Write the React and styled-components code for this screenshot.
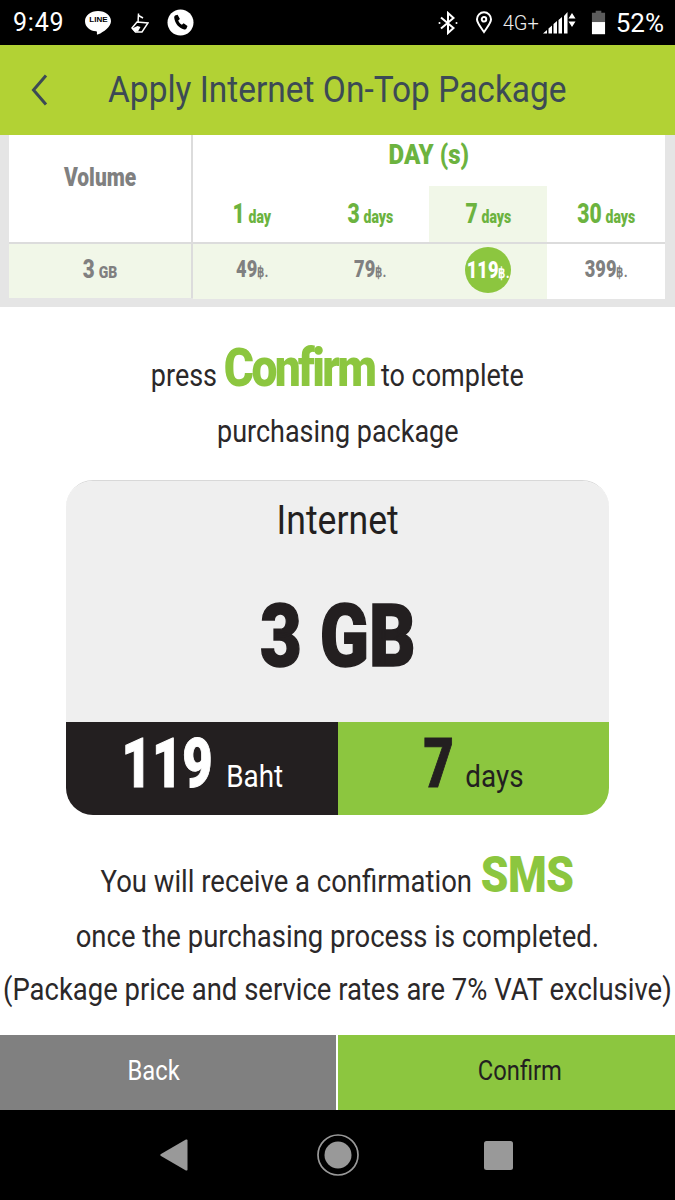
import React from "react";
import styled, { createGlobalStyle } from "styled-components";

const Global = createGlobalStyle`
  html, body { margin: 0; padding: 0; background: #fff; }
  body { font-family: Roboto, "Liberation Sans", sans-serif; }
  * { box-sizing: border-box; }
`;

const Page = styled.div`
  width: 675px; height: 1200px; display: flex; flex-direction: column; overflow: hidden;
`;
const Squeeze = styled.span`
  display: inline-flex; align-items: baseline; white-space: nowrap; transform: scaleX(${p => p.$k});
`;
const StatusBar = styled.div`
  height: 45px; background: #000; color: #fff; display: flex; align-items: center; flex: none;
  justify-content: space-between; padding: 0 11px 0 13px;
`;
const StatusGroup = styled.div`display: flex; align-items: center;`;
const Clock = styled.span`font-size: 25px; margin-right: 21px; letter-spacing: .8px;`;
const Net = styled.span`font-size: 20px; font-weight: 300; color: #eee;`;
const Percent = styled.span`font-size: 26px; margin-left: 10px;`;
const Header = styled.div`
  height: 90px; background: #b2d234; display: flex; align-items: center; padding-left: 31px; flex: none;
`;
const Title = styled.h1`
  margin: 0 0 0 60px; font-size: 36px; font-weight: 400; color: #3c4a55; white-space: nowrap;
  transform: scaleX(.93); transform-origin: left center;
`;
const TableWrap = styled.div`
  height: 172px; flex: none; background: #e5e5e5; padding: 0 10px 9px 9px;
`;
const Table = styled.div`
  background: #fff; height: 163px; display: grid;
  grid-template-columns: 182px 2px repeat(4, 118px); grid-template-rows: 107px 2px 54px;
`;
const VolumeHead = styled.div`
  grid-column: 1; grid-row: 1; display: flex; justify-content: center; padding-top: 28px;
  font-weight: 900; font-size: 25px; color: #808080;
`;
const VLine = styled.div`grid-column: 2; grid-row: 1 / 4; background: #dcdcdc;`;
const HLine = styled.div`grid-column: 1 / 7; grid-row: 2; background: #dcdcdc;`;
const DayHead = styled.div`
  grid-column: 3 / 7; grid-row: 1; display: grid; grid-template-columns: repeat(4, 1fr); grid-template-rows: 51px 56px;
`;
const DayTitle = styled.div`
  grid-column: 1 / 5; display: flex; justify-content: center; color: #6cb33f; font-weight: 900; font-size: 28px;
  padding-top: 3px;
`;
const DayCell = styled.div`
  background: ${p => (p.$on ? "#f1f7e8" : "#fff")}; color: #6cb33f; display: flex; align-items: baseline;
  justify-content: center; font-weight: 900; padding-top: 12px;
`;
const DayNum = styled.span`font-size: 27px; margin-right: 5px;`;
const DayUnit = styled.span`font-size: 18px;`;
const VolumeCell = styled.div`
  grid-column: 1; grid-row: 3; background: #f1f7e8; color: #808080; font-weight: 900; display: flex;
  align-items: baseline; justify-content: center; padding-top: 11px;
`;
const VolNum = styled.span`font-size: 25px; margin-right: 5px;`;
const VolUnit = styled.span`font-size: 17px;`;
const PriceRow = styled.div`
  grid-column: 3 / 7; grid-row: 3; display: grid; grid-template-columns: repeat(4, 1fr);
`;
const PriceCell = styled.div`
  background: ${p => (p.$plain ? "#fff" : "#f1f7e8")}; display: flex; align-items: center; justify-content: center;
  font-weight: 900; font-size: 24px; color: ${p => (p.$picked ? "#fff" : "#808080")};
  padding-bottom: 6px;
`;
const PriceBadge = styled.div`
  width: 46px; height: 46px; border-radius: 50%; background: #8cc63f; display: flex; align-items: center;
  justify-content: center; white-space: nowrap; margin-top: 3px; flex: none;
`;
const Baht = styled.span`font-size: 15px;`;
const Main = styled.div`
  flex: 1; display: flex; flex-direction: column; align-items: center; color: #2b2829; background: #fff;
`;
const Line = styled.div`
  font-size: ${p => p.$size || 31}px; line-height: ${p => p.$h || 56}px; white-space: nowrap;
  transform: scaleX(${p => p.$k || 0.87});
`;
const Intro = styled.div`padding-top: 41px; display: flex; flex-direction: column; align-items: center;`;
const Highlight = styled.span`
  color: #8cc63f; font-weight: 900; font-size: ${p => p.$size}px; margin: 0 ${p => p.$m}px; line-height: 0;
  letter-spacing: ${p => p.$ls}px; display: inline-block;
`;
const Card = styled.div`
  width: 543px; height: 335px; margin-top: 20px; border-radius: 27px; overflow: hidden; flex: none;
  display: flex; flex-direction: column; border-top: 1px solid #d8d8d8;
`;
const CardTop = styled.div`
  flex: 1; background: #efefef; display: flex; flex-direction: column; align-items: center;
`;
const CardLabel = styled.div`font-size: 40px; padding-top: 16px; color: #231f20; transform: scaleX(.89);`;
const CardVolume = styled.div`
  font-size: 87px; font-weight: 900; color: #231f20; margin-top: 44px; -webkit-text-stroke: 1.5px #231f20;
  transform: scaleX(.83); line-height: 96px; white-space: nowrap;
`;
const CardBottom = styled.div`height: 93px; display: flex; flex: none;`;
const Half = styled.div`
  flex: 1; background: ${p => p.$bg}; color: ${p => p.$fg}; display: flex; align-items: baseline;
  justify-content: center; padding-top: 4px;
`;
const HalfNum = styled.span`
  font-size: 68px; font-weight: 900; line-height: 76px; display: inline-block; transform: scaleX(.77);
  margin: 0 ${p => p.$m}px; -webkit-text-stroke: 1px ${p => p.$stroke};
`;
const HalfUnit = styled.span`
  font-size: 32px; display: inline-block; transform: scaleX(.87); margin: 0 -4px 0 ${p => p.$gap}px;
`;
const Note = styled.div`padding-top: 39px; display: flex; flex-direction: column; align-items: center;`;
const Actions = styled.div`display: flex; height: 75px; flex: none; margin-top: auto;`;
const Action = styled.button`
  border: 0; padding: 0 ${p => p.$pr}px 4px ${p => p.$pl}px; margin: 0; font: 400 27px Roboto, sans-serif;
  background: ${p => p.$bg}; color: ${p => p.$fg}; width: ${p => p.$w}px;
`;
const Gap = styled.div`width: 2px; background: #fff;`;
const NavBar = styled.div`
  height: 90px; flex: none; background: #000; display: flex; align-items: center; padding-left: 160px; gap: 123px;
`;
const LineBubble = styled.div`
  width: 26px; height: 26px; position: relative; margin-right: 20px; flex: none;
`;
const LineWord = styled.span`
  position: absolute; left: 0; right: 0; top: 5px; text-align: center; color: #000; font: 700 8px "Liberation Sans", sans-serif;
`;

const Bluetooth = () => (
  <svg width="20" height="24" viewBox="0 0 20 24" fill="none" stroke="#fff" strokeWidth="2">
    <path d="M3 6.500 15.500 17 10 22V2l5.500 5L3 17.500" />
    <circle cx="1.500" cy="12" r="1" fill="#fff" stroke="none" />
    <circle cx="18.500" cy="12" r="1" fill="#fff" stroke="none" />
  </svg>
);

export default function App() {
  return (
    <Page>
      <Global />
      <StatusBar>
        <StatusGroup>
          <Clock>9:49</Clock>
          <LineBubble>
            <svg width="26" height="26" viewBox="0 0 28 26"><path fill="#fff" d="M14 0C6 0 0 4.800 0 11c0 6 5.500 10.500 12 11 1 .2 1 .8.8 2.500-.1 1 .5 1.300 1.500.7C20 22.500 28 17 28 11 28 4.800 22 0 14 0Z" /></svg>
            <LineWord>LINE</LineWord>
          </LineBubble>
          <svg width="18" height="22" viewBox="0 0 18 22" style={{ marginRight: 18 }} fill="none" stroke="#fff" strokeWidth="1.500">
            <path d="M7.500 1.500 7 11" />
            <path d="M7.500 3.500l4.500 2.500" />
            <path d="M1 16l5-6 11 1-6 9-6.500 0Z" />
            <path fill="#fff" stroke="none" d="M1 16.500l5.500-2.500 3 1-2.500 4.500-3.500 0Z" />
          </svg>
          <svg width="27" height="27" viewBox="0 0 27 27">
            <circle cx="13.500" cy="13.500" r="13" fill="#fff" />
            <path fill="#000" d="M8 6.500l2.600-.8 2.300 4.300-1.700 1.500c.7 1.800 2 3.300 3.700 4.300l1.700-1.500 3.900 2.700-1 2.600c-.5.800-1.400 1-2.300.8C11.500 19 8 14.500 7.200 8.800c-.1-1 .2-1.800.8-2.300Z" />
          </svg>
        </StatusGroup>
        <StatusGroup>
          <Bluetooth />
          <svg width="18" height="25" viewBox="0 0 20 25" style={{ marginLeft: 17, marginRight: 10 }} fill="none" stroke="#fff" strokeWidth="2.200">
            <path d="M10 23C5 16 2.200 13 2.200 9a7.800 7.800 0 0 1 15.600 0c0 4-2.800 7-7.800 14Z" />
            <circle cx="10" cy="9" r="2.500" />
          </svg>
          <Net>4G+</Net>
          <svg width="34" height="24" viewBox="0 0 34 24" style={{ marginLeft: 4 }} fill="#fff">
            <path d="M0 22.500 4 19v3.500ZM5.500 22.500v-5l3.500-3v8ZM10.500 22.500v-9.500l3.500-3v12.500ZM15.500 22.500V9l3.500-3v16.500Z" />
            <path d="M21 5 24.500 1v21.500H21Z" />
            <path d="M25.500 7.500 29 2l3.500 5.500ZM25.500 10.500h7L29 16Z" />
          </svg>
          <svg width="15" height="25" viewBox="0 0 16 25" style={{ marginLeft: 14 }}>
            <path fill="#5c5c5c" d="M5 0h6v2h4v10H1V2h4Z" />
            <path fill="#fff" d="M1 12h14v13H1Z" />
          </svg>
          <Percent>52%</Percent>
        </StatusGroup>
      </StatusBar>
      <Header>
        <svg width="17" height="32" viewBox="0 0 17 32" fill="none" stroke="#3c4a55" strokeWidth="3">
          <path d="M15 1.500 2.500 16 15 30.500" />
        </svg>
        <Title>Apply Internet On-Top Package</Title>
      </Header>
      <TableWrap>
        <Table>
          <VolumeHead><Squeeze $k={0.84}>Volume</Squeeze></VolumeHead>
          <VLine />
          <DayHead>
            <DayTitle><Squeeze $k={0.86}>DAY (s)</Squeeze></DayTitle>
            <DayCell><Squeeze $k={0.78}><DayNum>1</DayNum><DayUnit>day</DayUnit></Squeeze></DayCell>
            <DayCell><Squeeze $k={0.78}><DayNum>3</DayNum><DayUnit>days</DayUnit></Squeeze></DayCell>
            <DayCell $on><Squeeze $k={0.78}><DayNum>7</DayNum><DayUnit>days</DayUnit></Squeeze></DayCell>
            <DayCell><Squeeze $k={0.78}><DayNum>30</DayNum><DayUnit>days</DayUnit></Squeeze></DayCell>
          </DayHead>
          <HLine />
          <VolumeCell><Squeeze $k={0.82}><VolNum>3</VolNum><VolUnit>GB</VolUnit></Squeeze></VolumeCell>
          <PriceRow>
            <PriceCell><Squeeze $k={0.76}>49<Baht>฿.</Baht></Squeeze></PriceCell>
            <PriceCell><Squeeze $k={0.76}>79<Baht>฿.</Baht></Squeeze></PriceCell>
            <PriceCell $picked><PriceBadge><Squeeze $k={0.76}>119<Baht>฿.</Baht></Squeeze></PriceBadge></PriceCell>
            <PriceCell $plain><Squeeze $k={0.76}>399<Baht>฿.</Baht></Squeeze></PriceCell>
          </PriceRow>
        </Table>
      </TableWrap>
      <Main>
        <Intro>
          <Line>press <Highlight $size={53} $m={0} $ls={-3}>Confirm</Highlight> to complete</Line>
          <Line>purchasing package</Line>
        </Intro>
        <Card>
          <CardTop>
            <CardLabel>Internet</CardLabel>
            <CardVolume>3 GB</CardVolume>
          </CardTop>
          <CardBottom>
            <Half $bg="#231f20" $fg="#fff"><HalfNum $m={-12} $stroke="#fff">119</HalfNum><HalfUnit $gap={7}>Baht</HalfUnit></Half>
            <Half $bg="#8cc63f" $fg="#231f20"><HalfNum $m={-4} $stroke="#231f20">7</HalfNum><HalfUnit $gap={6}>days</HalfUnit></Half>
          </CardBottom>
        </Card>
        <Note>
          <Line $h={56} $k={0.886}>You will receive a confirmation <Highlight $size={50} $m={2} $ls={-.5}>SMS</Highlight></Line>
          <Line $h={53} $k={0.886}>once the purchasing process is completed.</Line>
          <Line $h={53} $k={0.886}>(Package price and service rates are 7% VAT exclusive)</Line>
        </Note>
      </Main>
      <Actions>
        <Action $bg="#808080" $fg="#fff" $w={336} $pr={28} $pl={0}><Squeeze $k={0.88}>Back</Squeeze></Action>
        <Gap />
        <Action $bg="#8cc63f" $fg="#231f20" $w={337} $pr={0} $pl={26}><Squeeze $k={0.88}>Confirm</Squeeze></Action>
      </Actions>
      <NavBar>
        <svg width="28" height="32" viewBox="0 0 28 32"><path fill="#999" d="M27.500 1.500v29c0 1-.8 1.300-1.600.9L1 17c-1-.6-1-1.400 0-2L25.900.6c.8-.4 1.600 0 1.600.9Z" /></svg>
        <svg width="42" height="42" viewBox="0 0 42 42" style={{ marginLeft: 6 }}>
          <circle cx="21" cy="21" r="20" fill="none" stroke="#999" strokeWidth="1.700" />
          <circle cx="21" cy="21" r="13.500" fill="#999" />
        </svg>
        <svg width="29" height="29" viewBox="0 0 29 29" style={{ marginLeft: 2 }}><rect width="29" height="29" rx="2.500" fill="#999" /></svg>
      </NavBar>
    </Page>
  );
}
